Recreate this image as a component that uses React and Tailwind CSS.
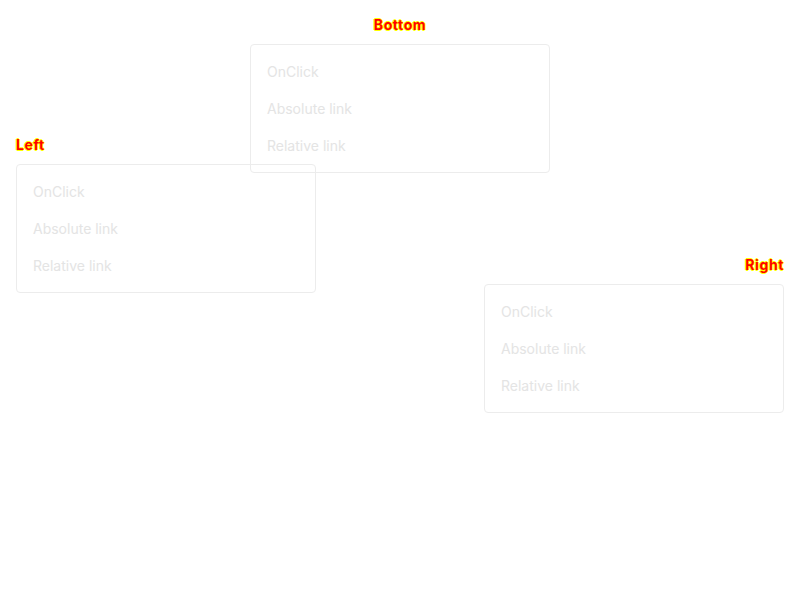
const ITEMS = ['OnClick', 'Absolute link', 'Relative link']

function Menu() {
  return (
    <div className="w-[300px] rounded border border-[#ececec] py-[8px]">
      {ITEMS.map(t => (
        <div key={t} className="px-[16px] py-[8px] text-[14px] leading-[21px] text-[#e4e4e4]">{t}</div>
      ))}
    </div>
  )
}

function Block({ label, align }) {
  const cls = {
    center: 'items-center',
    left: 'items-start pl-[16px]',
    right: 'items-end pr-[16px]',
  }[align]
  return (
    <div className={`flex flex-col h-[120px] ${cls}`}>
      <div className="text-[14px] leading-[20px] font-bold tracking-[0.6px] text-[#ff0000] [text-shadow:1px_0_0_#ffff00,-1px_0_0_#ffff00,0_1px_0_#ffff00,0_-1px_0_#ffff00]">{label}</div>
      <div className="mt-[9px]">
        <Menu />
      </div>
    </div>
  )
}

export default function App() {
  return (
    <div className="w-[800px] h-[600px] bg-white pt-[15px]" style={{ fontFamily: 'Inter, "Noto Sans", sans-serif' }}>
      <Block label="Bottom" align="center" />
      <Block label="Left" align="left" />
      <Block label="Right" align="right" />
    </div>
  )
}
